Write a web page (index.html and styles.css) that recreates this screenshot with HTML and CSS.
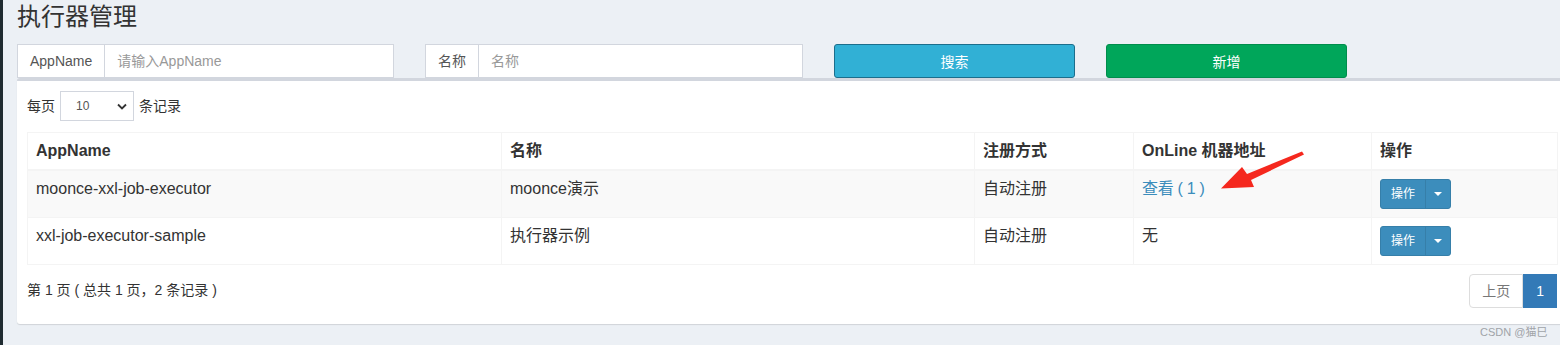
FILE: index.html
```html
<html>
	<head>
		<meta charset="utf-8">
		<meta name="viewport" content="width=device-width">
		<link rel="stylesheet" href="styles.css">
	</head>
	<body>
		<div class="wrapper">
			<div class="sidebar-edge"></div>
			<div class="content">
				<h1>执行器管理</h1>
				<div class="filters">
					<div class="input-group group-app">
						<span class="addon">AppName</span>
						<span class="field placeholder">请输入AppName</span>
					</div>
					<div class="input-group group-title">
						<span class="addon">名称</span>
						<span class="field placeholder">名称</span>
					</div>
					<button class="btn btn-info">搜索</button>
					<button class="btn btn-success">新增</button>
				</div>

				<div class="box">
					<div class="box-body">
						<div class="length">
							每页
							<div class="select">
								<span>10</span>
								<svg width="10" height="7" viewBox="0 0 10 7"><path d="M1 1.5 L5 5.5 L9 1.5" fill="none" stroke="#333" stroke-width="1.8"/></svg>
							</div>
							条记录
						</div>

						<table class="grid">
							<colgroup>
								<col style="width:474px">
								<col style="width:473px">
								<col style="width:159px">
								<col style="width:238px">
								<col style="width:186px">
							</colgroup>
							<thead>
								<tr>
									<th>AppName</th>
									<th>名称</th>
									<th>注册方式</th>
									<th>OnLine 机器地址</th>
									<th>操作</th>
								</tr>
							</thead>
							<tbody>
								<tr class="odd">
									<td>moonce-xxl-job-executor</td>
									<td>moonce演示</td>
									<td>自动注册</td>
									<td><a class="link">查看 ( 1 )</a></td>
									<td>
										<div class="btn-group">
											<span class="btn-op">操作</span>
											<span class="btn-caret"><i class="caret"></i></span>
										</div>
									</td>
								</tr>
								<tr>
									<td>xxl-job-executor-sample</td>
									<td>执行器示例</td>
									<td>自动注册</td>
									<td>无</td>
									<td>
										<div class="btn-group">
											<span class="btn-op">操作</span>
											<span class="btn-caret"><i class="caret"></i></span>
										</div>
									</td>
								</tr>
							</tbody>
						</table>

						<div class="table-footer">
							<div class="info">第 1 页 ( 总共 1 页，2 条记录 )</div>
							<ul class="pagination">
								<li class="disabled">上页</li>
								<li class="active">1</li>
							</ul>
						</div>
					</div>
				</div>
				<div class="watermark">CSDN @猫巳</div>
			</div>
		</div>

		<svg class="arrow" width="1560" height="345" viewBox="0 0 1560 345">
			<polygon fill="#f5281e" points="1302,151.5 1304,154.5 1251,180 1254,187 1221,188.5 1242,167 1247,174"/>
		</svg>
	</body>
</html>
```

FILE: styles.css
```css
body {
	margin: 0;
	background-color: #ecf0f5;
	font-family: "Liberation Sans", "Noto Sans CJK SC", sans-serif;
	font-size: 14px;
	line-height: 20px;
	color: #333;
	overflow: hidden;
	width: 1560px;
	height: 345px;
}

.wrapper {
	display: flex;
	height: 345px;
}

.sidebar-edge {
	width: 3px;
	flex: none;
	background-color: #1f2b30;
}

.content {
	flex: none;
	width: 1564px;
	padding-left: 14px;
	position: relative;
}

h1 {
	margin: 0;
	padding-top: 4px;
	font-size: 24px;
	line-height: 26px;
	font-weight: normal;
	color: #333;
}

.filters {
	display: flex;
	gap: 31px;
	margin-top: 14px;
	height: 34px;
}

.input-group {
	display: flex;
	height: 34px;
	box-sizing: border-box;
	border: 1px solid #d2d6de;
	background: #fff;
}

.group-app {
	width: 377px;
}

.group-title {
	width: 378px;
}

.addon {
	padding: 6px 12px;
	border-right: 1px solid #d2d6de;
	color: #555;
	line-height: 20px;
}

.field {
	padding: 6px 12px;
	line-height: 20px;
}

.placeholder {
	color: #999;
}

.btn {
	width: 241px;
	height: 34px;
	border-radius: 3px;
	font-family: inherit;
	font-size: 14px;
	color: #fff;
	padding: 0;
	cursor: pointer;
}

.btn-info {
	background-color: #31b0d5;
	border: 1px solid #1c6e8c;
}

.btn-success {
	background-color: #00a65a;
	border: 1px solid #008d4c;
}

.box {
	width: 1550px;
	background: #fff;
	border-top: 3px solid #d2d6de;
	border-radius: 3px;
	box-shadow: 0 1px 1px rgba(0, 0, 0, 0.12);
}

.box-body {
	padding: 10px 10px 16px 10px;
}

.length {
	display: flex;
	align-items: center;
	gap: 5px;
	height: 30px;
	color: #333;
}

.select {
	display: flex;
	align-items: center;
	justify-content: space-between;
	width: 74px;
	height: 30px;
	box-sizing: border-box;
	border: 1px solid #d2d6de;
	padding: 0 6px 0 15px;
	font-size: 12px;
	color: #555;
}

.grid {
	margin-top: 11px;
	border-collapse: collapse;
	table-layout: fixed;
	width: 1530px;
	border: 1px solid #f4f4f4;
}

.grid th,
.grid td {
	border: 1px solid #f4f4f4;
	padding: 8px;
	text-align: left;
	vertical-align: top;
	line-height: 20px;
}

.grid th {
	font-weight: bold;
	border-bottom-width: 2px;
}

.grid tr.odd td {
	background-color: #f9f9f9;
}

.link {
	color: #3c8dbc;
	letter-spacing: -0.3px;
}

.btn-group {
	display: inline-flex;
	height: 30px;
	border-radius: 3px;
	overflow: hidden;
	border: 1px solid #367fa9;
	box-sizing: border-box;
	background-color: #3c8dbc;
	color: #fff;
	font-size: 12px;
}

.btn-op {
	padding: 0 10px;
	line-height: 28px;
	border-right: 1px solid #367fa9;
}

.btn-caret {
	display: flex;
	align-items: center;
	justify-content: center;
	width: 24px;
}

.caret {
	width: 0;
	height: 0;
	border-top: 4px solid #fff;
	border-left: 4px solid transparent;
	border-right: 4px solid transparent;
}

.table-footer {
	display: flex;
	justify-content: space-between;
	margin-top: 9px;
}

.info {
	padding-top: 6px;
	color: #333;
}

.pagination {
	display: flex;
	list-style: none;
	margin: 0;
	padding: 0;
}

.pagination li {
	padding: 6px 12px;
	line-height: 20px;
	border: 1px solid #ddd;
}

.pagination .disabled {
	color: #777;
	background: #fff;
	border-radius: 4px 0 0 4px;
}

.pagination .active {
	color: #fff;
	background-color: #337ab7;
	border-color: #337ab7;
}

.watermark {
	position: absolute;
	left: 1477px;
	top: 322px;
	font-size: 11px;
	color: #a0a3a8;
}

.arrow {
	position: absolute;
	left: 0;
	top: 0;
	pointer-events: none;
}
```
